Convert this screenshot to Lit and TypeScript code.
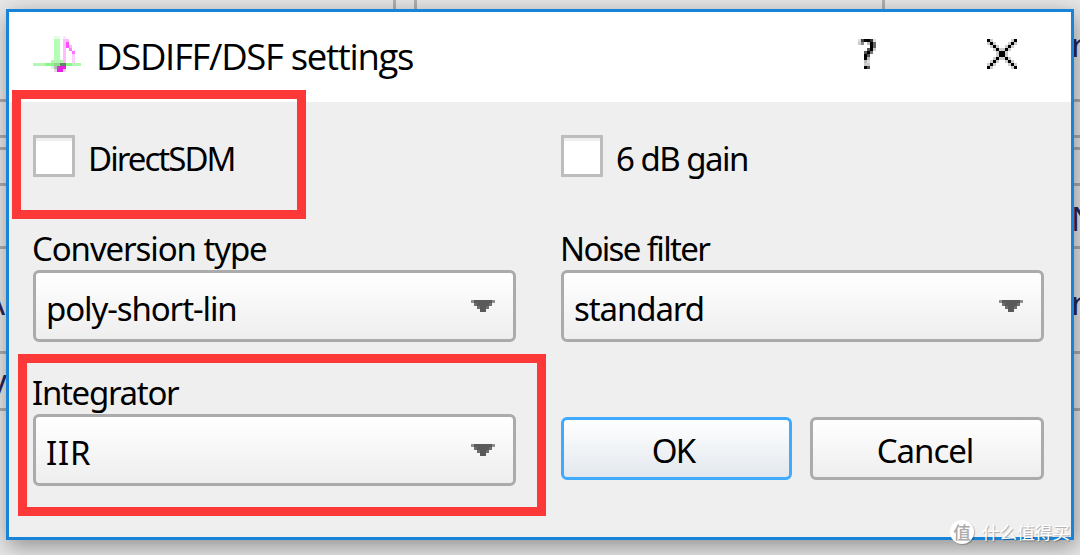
import { LitElement, html, svg, css } from 'lit';
import { customElement, property } from 'lit/decorators.js';

type Pixel = [number, number, number, number, string];

// x, y, width, height and fill on a 16 x 12 grid
const notePixels: Pixel[] = [
  [7, 0, 2, 1, '#e4fde4'],
  [7, 1, 2, 7, '#b3ffb3'],
  [10, 0, 1, 1, '#ffe6ff'],
  [10, 1, 1, 8, '#ffbdff'],
  [11, 1, 1, 1, '#ffb8ff'],
  [11, 2, 1, 2, '#ff4dff'],
  [12, 3, 1, 1, '#ffb8ff'],
  [12, 4, 1, 1, '#ff80ff'],
  [13, 5, 1, 1, '#ff70ff'],
  [13, 6, 1, 3, '#ffd0ff'],
  [6, 8, 4, 1, '#b3f7b3'],
  [0, 9, 4, 1, '#b3f7b3'],
  [4, 9, 3, 1, '#8af78a'],
  [7, 9, 2, 1, '#8fd98f'],
  [9, 9, 2, 1, '#608a60'],
  [11, 9, 2, 1, '#8af78a'],
  [13, 9, 3, 1, '#b3f7b3'],
  [6, 10, 1, 1, '#d8f7d8'],
  [7, 10, 1, 1, '#b7b7b7'],
  [8, 10, 1, 1, '#b050b0'],
  [9, 10, 2, 1, '#e81ee8'],
  [7, 11, 1, 1, '#e4d4e4'],
  [8, 11, 2, 1, '#e61ee6'],
  [10, 11, 1, 1, '#eed0ee'],
];

// same layout, on a 6 x 10 grid
const helpPixels: Pixel[] = [
  [0, 0, 1, 1, '#ddd'],
  [1, 0, 1, 1, '#444'],
  [2, 0, 2, 1, '#000'],
  [4, 0, 1, 1, '#333'],
  [5, 0, 1, 1, '#ddd'],
  [0, 1, 1, 1, '#ccc'],
  [1, 1, 1, 1, '#888'],
  [3, 1, 1, 1, '#bbb'],
  [4, 1, 1, 2, '#000'],
  [5, 1, 1, 2, '#666'],
  [3, 3, 1, 1, '#555'],
  [4, 3, 1, 1, '#000'],
  [5, 3, 1, 1, '#ccc'],
  [2, 4, 1, 1, '#555'],
  [3, 4, 1, 1, '#000'],
  [4, 4, 1, 1, '#777'],
  [2, 5, 1, 2, '#000'],
  [3, 5, 1, 1, '#555'],
  [3, 6, 1, 1, '#bbb'],
  [2, 7, 1, 1, '#bbb'],
  [3, 7, 1, 1, '#ddd'],
  [2, 8, 2, 1, '#ccc'],
  [2, 9, 1, 1, '#000'],
  [3, 9, 1, 1, '#555'],
];

const closePixels = [0, 1, 2, 3, 4, 5, 6, 7, 8, 9];

const drawPixels = (pixels: Pixel[]) =>
  pixels.map(([x, y, w, h, c]) => svg`<rect x=${x} y=${y} width=${w} height=${h} fill=${c} />`);

@customElement('check-option')
export class CheckOption extends LitElement {
  @property() label = '';

  render() {
    return html`<span class="box"></span><span class="text">${this.label}</span>`;
  }

  static styles = css`
    :host {
      display: flex;
      align-items: center;
      height: 42px;
    }
    .box {
      box-sizing: border-box;
      width: 42px;
      height: 42px;
      border: 3px solid #bdbdbd;
      background: linear-gradient(#efefef 3px, #fff 3px);
    }
    .text {
      margin: 6px 0 0 13px;
      line-height: 42px;
      white-space: pre;
    }
  `;
}

@customElement('select-field')
export class SelectField extends LitElement {
  render() {
    return html`
      <div class="label"><slot name="label"></slot></div>
      <div class="combo">
        <slot name="value"></slot>
        <svg width="24" height="12" viewBox="0 0 8 4" shape-rendering="crispEdges">
          <path d="M0 0H8V1H7V2H6V3H5V4H3V3H2V2H1V1H0Z" fill="#5a5a5a" />
          <path d="M0 0H1V1H0ZM7 0H8V1H7Z" fill="#8f8f8f" />
          <path d="M1 1H2V2H1ZM6 1H7V2H6ZM2 2H3V3H2ZM5 2H6V3H5Z" fill="#6e6e6e" />
        </svg>
      </div>
    `;
  }

  static styles = css`
    :host {
      display: block;
      height: 114px;
    }
    .label {
      height: 42px;
      margin-left: -1px;
      line-height: 42px;
      white-space: pre;
    }
    .combo {
      box-sizing: border-box;
      display: flex;
      align-items: center;
      justify-content: space-between;
      height: 72px;
      padding: 4px 18px 0 10px;
      border: 3px solid #ababab;
      border-radius: 6px;
      background: linear-gradient(#fff, #eee);
    }
    svg {
      display: block;
      margin-bottom: 4px;
    }
  `;
}

@customElement('app-root')
export class AppRoot extends LitElement {
  render() {
    return html`
      <div class="desktop">
        ${[393, 414, 882].map((x) => html`<i class="vline" style="left:${x}px"></i>`)}
        ${[99, 135, 147, 183, 246, 351, 408].map((y) => html`<i class="hline" style="top:${y}px"></i>`)}
        <span class="peek a">A</span>
        <span class="peek y">y</span>
        <span class="peek r1">r</span>
        <span class="peek n">N</span>
        <span class="peek r2">r</span>
      </div>

      <div class="dialog">
        <header>
          <svg class="note" width="48" height="36" viewBox="0 0 16 12" shape-rendering="crispEdges">
            ${drawPixels(notePixels)}
          </svg>
          <h1>DSDIFF/DSF settings</h1>
          <svg class="help" width="18" height="30" viewBox="0 0 6 10" shape-rendering="crispEdges">
            ${drawPixels(helpPixels)}
          </svg>
          <svg class="close" width="30" height="30" viewBox="0 0 10 10" shape-rendering="crispEdges">
            ${closePixels.slice(0, 9).map((i) => svg`
              <rect x=${i} y=${i + 1} width="1" height="1" fill="#ccc" />
              <rect x=${i + 1} y=${i} width="1" height="1" fill="#ccc" />
              <rect x=${i} y=${8 - i} width="1" height="1" fill="#ccc" />
              <rect x=${i + 1} y=${9 - i} width="1" height="1" fill="#ccc" />
            `)}
            ${closePixels.map((i) => svg`
              <rect x=${i} y=${i} width="1" height="1" fill="#000" />
              <rect x=${i} y=${9 - i} width="1" height="1" fill="#000" />
            `)}
          </svg>
        </header>

        <main>
          <check-option class="t-direct" label="DirectSDM"></check-option>
          <check-option class="t-gain" label="6 dB gain"></check-option>
          <select-field>
            <span slot="label">Conversion type</span>
            <span slot="value">poly-short-lin</span>
          </select-field>
          <select-field>
            <span slot="label" class="t-noise">Noise filter</span>
            <span slot="value">standard</span>
          </select-field>
          <select-field>
            <span slot="label" class="t-int">Integrator</span>
            <span slot="value" class="t-iir">IIR</span>
          </select-field>
          <div class="actions">
            <button class="ok">OK</button>
            <button class="cancel">Cancel</button>
          </div>
        </main>
      </div>

      <div class="mark first"></div>
      <div class="mark second"></div>
      <div class="watermark"><b>值</b><span>什么值得买</span></div>
    `;
  }

  static styles = css`
    :host {
      display: block;
      position: relative;
      width: 1080px;
      height: 555px;
      overflow: hidden;
      background: #e8e8e8;
      font-family: 'Noto Sans', 'Noto Sans CJK SC', sans-serif;
      font-size: 33px;
      letter-spacing: -1.1px;
      color: #000;
    }
    .desktop {
      position: absolute;
      inset: 0;
    }
    .vline {
      position: absolute;
      top: 0;
      width: 3px;
      height: 9px;
      background: #b0b0b0;
    }
    .hline {
      position: absolute;
      left: 0;
      width: 100%;
      height: 3px;
      background: #adadad;
    }
    .peek {
      position: absolute;
      line-height: 40px;
      color: #26265c;
    }
    .a { left: -16px; top: 283px; }
    .y { left: -10px; top: 361px; }
    .r1 { left: 1071px; top: 25px; }
    .n { left: 1071px; top: 199px; }
    .r2 { left: 1071px; top: 283px; }
    .dialog {
      box-sizing: border-box;
      width: 1068px;
      height: 531px;
      position: relative;
      top: 9px;
      margin-left: 6px;
      border: 3px solid #1883d7;
      background: #efefef;
      box-shadow: 2px 6px 22px rgba(0, 0, 0, 0.4);
    }
    header {
      box-sizing: border-box;
      display: flex;
      height: 90px;
      padding-left: 24px;
      background: #fff;
    }
    .note {
      margin-top: 24px;
    }
    h1 {
      width: 328px;
      margin: 19px 0 0 15px;
      font: 400 36.5px/50px 'Open Sans', sans-serif;
      letter-spacing: -1.3px;
      white-space: pre;
    }
    .help {
      margin: 27px 0 0 434px;
    }
    .close {
      margin: 27px 0 0 111px;
    }
    main {
      display: grid;
      grid-template-columns: 483px 483px;
      grid-template-rows: 42px 114px 114px;
      column-gap: 45px;
      row-gap: 30px;
      padding: 33px 24px 0;
    }
    select-field {
      margin-top: 21px;
    }
    .t-direct { letter-spacing: -1.95px; }
    .t-gain { letter-spacing: -1.5px; }
    .t-noise { letter-spacing: -1.65px; }
    .t-int { letter-spacing: -1.3px; }
    .t-iir { letter-spacing: 0.8px; }
    .actions {
      display: flex;
      gap: 18px;
      margin-top: 66px;
    }
    button {
      box-sizing: border-box;
      height: 63px;
      padding: 4px 4px 0 0;
      border: 3px solid #ababab;
      border-radius: 6px;
      background: linear-gradient(#fff, #eee);
      font: inherit;
      color: #000;
      letter-spacing: -1px;
    }
    .ok {
      width: 231px;
      padding-right: 7px;
      border-color: #40aaff;
      background: linear-gradient(#fff, #e2e8ee);
      letter-spacing: -1.8px;
    }
    .cancel {
      width: 234px;
    }
    .mark {
      box-sizing: border-box;
      position: absolute;
      border: 9px solid #fc3838;
    }
    .first {
      left: 12px;
      top: 90px;
      width: 294px;
      height: 129px;
    }
    .second {
      left: 18px;
      top: 354px;
      width: 528px;
      height: 162px;
    }
    .watermark {
      position: absolute;
      left: 950px;
      top: 520px;
      display: flex;
      align-items: center;
      gap: 8px;
      font: 17.6px/24px 'Noto Sans CJK SC', sans-serif;
      letter-spacing: 0;
      color: #fff;
      text-shadow: 1px 1px 1px rgba(0, 0, 0, 0.3);
      white-space: pre;
    }
    .watermark b {
      width: 24px;
      height: 24px;
      border-radius: 50%;
      background: #fff;
      color: #aaa;
      font-weight: 500;
      text-align: center;
      text-shadow: none;
      box-shadow: 1px 1px 1px rgba(0, 0, 0, 0.25);
    }
  `;
}
